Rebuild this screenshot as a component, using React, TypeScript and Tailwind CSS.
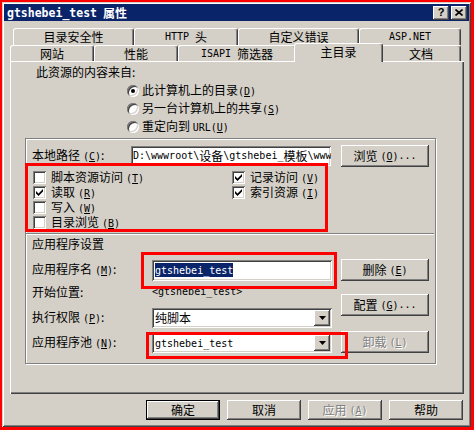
import React from "react";

const RAISED =
  "shadow-[inset_-1px_-1px_#404040,inset_1px_1px_#ffffff,inset_-2px_-2px_#808080]";
const DEFAULT_BTN =
  "shadow-[inset_0_0_0_1px_#000000,inset_-2px_-2px_#404040,inset_2px_2px_#ffffff,inset_-3px_-3px_#808080]";
const SUNKEN =
  "shadow-[inset_1px_1px_#808080,inset_-1px_-1px_#ffffff,inset_2px_2px_#404040,inset_-2px_-2px_#d4d0c8]";
const DISABLED_TEXT = "text-[#808080] [text-shadow:1px_1px_0_#ffffff]";

// 라틴 문자는 고정폭 (宋体 반각 폭 6px 맞춤)
function L({ children }: { children: React.ReactNode }) {
  return (
    <span className="font-['DejaVu_Sans_Mono',monospace] text-[10px] leading-[12px]">
      {children}
    </span>
  );
}

// 단축키 표시 (X)
function Mn({ k, gap = true }: { k: string; gap?: boolean }) {
  return (
    <span className={gap ? "ml-[3px]" : ""}>
      <L>
        (<u className="underline-offset-1">{k}</u>)
      </L>
    </span>
  );
}

function Btn({
  className,
  children,
  disabled,
  isDefault,
}: {
  className: string;
  children: React.ReactNode;
  disabled?: boolean;
  isDefault?: boolean;
}) {
  return (
    <div
      className={`flex shrink-0 items-center justify-center bg-[#d4d0c8] leading-[12px] ${
        isDefault ? DEFAULT_BTN : RAISED
      } ${disabled ? DISABLED_TEXT : ""} ${className}`}
    >
      {children}
    </div>
  );
}

function Check({ checked }: { checked?: boolean }) {
  return (
    <div
      className={`flex h-[13px] w-[13px] shrink-0 items-center justify-center bg-white ${SUNKEN}`}
    >
      {checked && (
        <svg width="7" height="7" viewBox="0 0 7 7">
          <polygon points="0,2 2.5,4.5 7,0 7,2.5 2.5,7 0,4.5" fill="#000" />
        </svg>
      )}
    </div>
  );
}

function CheckRow({
  checked,
  label,
  k,
}: {
  checked?: boolean;
  label: string;
  k: string;
}) {
  return (
    <div className="flex h-[15px] items-center gap-[5px]">
      <Check checked={checked} />
      <span className="leading-[12px] whitespace-nowrap">
        {label}
        <Mn k={k} />
      </span>
    </div>
  );
}

function Radio({ on }: { on?: boolean }) {
  return (
    <div
      className={`flex h-3 w-3 shrink-0 items-center justify-center rounded-full bg-white ${SUNKEN}`}
    >
      {on && <div className="h-1 w-1 rounded-full bg-black" />}
    </div>
  );
}

function Select({ children }: { children: React.ReactNode }) {
  return (
    <div
      className={`flex h-[20px] w-[180px] items-center bg-white pr-[2px] pl-[3px] ${SUNKEN}`}
    >
      <div className="flex-1 leading-[12px] whitespace-nowrap">{children}</div>
      <div
        className={`flex h-[16px] w-[16px] items-center justify-center bg-[#d4d0c8] ${RAISED}`}
      >
        <svg width="7" height="4" viewBox="0 0 7 4">
          <path d="M0 0h7L3.5 4z" fill="#000" />
        </svg>
      </div>
    </div>
  );
}

function Tab({
  className,
  children,
  active,
}: {
  className: string;
  children: React.ReactNode;
  active?: boolean;
}) {
  return (
    <div
      className={`flex shrink-0 items-center justify-center rounded-t-[3px] border-t border-r border-l border-t-white border-r-[#404040] border-l-white bg-[#d4d0c8] leading-[12px] shadow-[inset_-1px_0_#808080] ${
        active ? "relative z-10 -mx-[2px] -mt-[2px] -mb-[1px] pb-[2px]" : ""
      } ${className}`}
    >
      {children}
    </div>
  );
}

function Red({ className }: { className: string }) {
  return (
    <div
      className={`pointer-events-none absolute border-[3px] border-[#ff0000] ${className}`}
    />
  );
}

export default function App() {
  return (
    <div className="h-[430px] w-[474px] bg-[#ff0000] pt-[2px] pr-[3px] pb-[3px] pl-[2px] font-['Noto_Sans_CJK_SC',sans-serif] text-[12px] leading-[14px] text-black">
      <div className="flex h-full w-full flex-col bg-[#d4d0c8] p-[2px] shadow-[inset_1px_1px_#d4d0c8,inset_-1px_-1px_#404040,inset_2px_2px_#ffffff,inset_-2px_-2px_#808080]">
        {/* 제목 표시줄 */}
        <div className="flex h-[17px] items-center justify-between bg-[#0a246a] pr-[2px] pl-[3px]">
          <div className="flex items-center font-bold text-white">
            <span className="font-['DejaVu_Sans_Mono',monospace] text-[11.5px]">
              gtshebei_test
            </span>
            <span className="ml-[6px]">属性</span>
          </div>
          <div className="flex gap-[2px]">
            <Btn className="h-[14px] w-[16px] pb-[1px] text-[11px] font-bold">
              <span className="font-['Liberation_Sans',sans-serif]">?</span>
            </Btn>
            <Btn className="h-[14px] w-[16px] pb-[1px]">
              <svg width="8" height="7" viewBox="0 0 8 7">
                <path
                  d="M0.5 0.5L7.5 6.5M7.5 0.5L0.5 6.5"
                  stroke="#000"
                  strokeWidth="1.6"
                />
              </svg>
            </Btn>
          </div>
        </div>

        {/* 탭 */}
        <div className="mt-[7px] flex h-[17px] pl-[9px]">
          <Tab className="h-[17px] w-[121px]">目录安全性</Tab>
          <Tab className="h-[17px] w-[104px]">
            <L>HTTP</L>
            <span className="ml-[6px]">头</span>
          </Tab>
          <Tab className="h-[17px] w-[121px]">自定义错误</Tab>
          <Tab className="h-[17px] w-[102px]">
            <L>ASP.NET</L>
          </Tab>
        </div>
        <div className="flex h-[16px] items-start pl-[6px]">
          <Tab className="h-[16px] w-[84px]">网站</Tab>
          <Tab className="h-[16px] w-[84px]">性能</Tab>
          <Tab className="h-[16px] w-[118px]">
            <L>ISAPI</L>
            <span className="ml-[6px]">筛选器</span>
          </Tab>
          <Tab active className="h-[19px] w-[89px]">
            主目录
          </Tab>
          <Tab className="h-[16px] w-[80px]">文档</Tab>
        </div>

        {/* 탭 패널 */}
        <div className="ml-[6px] flex h-[333px] w-[454px] flex-col shadow-[inset_1px_1px_#ffffff,inset_-1px_-1px_#404040,inset_-2px_-2px_#808080]">
          <div className="mt-[1px] flex h-[20px] items-center pl-[26px]">
            此资源的内容来自:
          </div>
          <div className="flex flex-col pl-[117px]">
            <div className="flex h-[18px] items-center gap-[3px]">
              <Radio on />
              <span className="leading-[12px]">
                此计算机上的目录
                <Mn k="D" gap={false} />
              </span>
            </div>
            <div className="flex h-[18px] items-center gap-[3px]">
              <Radio />
              <span className="leading-[12px]">
                另一台计算机上的共享
                <Mn k="S" gap={false} />
              </span>
            </div>
            <div className="flex h-[18px] items-center gap-[3px]">
              <Radio />
              <span className="leading-[12px]">
                重定向到 <L>URL</L>
                <Mn k="U" gap={false} />
              </span>
            </div>
          </div>

          {/* 그룹 상자 */}
          <div className="relative mt-[2px] ml-[15px] flex h-[226px] w-[411px] flex-col border border-[#808080] shadow-[inset_1px_1px_#ffffff,1px_1px_#ffffff]">
            <div className="mt-[6px] flex h-[22px] items-center pl-[6px]">
              <div className="w-[99px] leading-[12px]">
                本地路径
                <Mn k="C" />:
              </div>
              <div
                className={`flex h-[20px] w-[200px] items-center overflow-hidden bg-white pl-[2px] leading-[12px] whitespace-nowrap ${SUNKEN}`}
              >
                <L>D:\wwwroot\</L>设备<L>\gtshebei_</L>模板<L>\www</L>
              </div>
              <Btn className="ml-[10px] h-[22px] w-[88px]">
                浏览
                <Mn k="O" />
                <L>...</L>
              </Btn>
            </div>

            <div className="mt-[3px] flex pl-[7px]">
              <div className="flex w-[199px] flex-col">
                <CheckRow label="脚本资源访问" k="T" />
                <CheckRow checked label="读取" k="R" />
                <CheckRow label="写入" k="W" />
                <CheckRow label="目录浏览" k="B" />
              </div>
              <div className="flex flex-col">
                <CheckRow checked label="记录访问" k="V" />
                <CheckRow checked label="索引资源" k="I" />
              </div>
            </div>

            <div className="mt-[3px] mr-[1px] h-[2px] border-t border-b border-t-[#808080] border-b-white" />

            <div className="flex h-[18px] items-center pl-[6px]">应用程序设置</div>

            <div className="flex">
              <div className="flex w-[306px] flex-col pl-[6px]">
                <div className="mt-[6px] flex h-[22px] items-center">
                  <div className="w-[120px] leading-[12px]">
                    应用程序名
                    <Mn k="M" />:
                  </div>
                  <div
                    className={`flex h-[21px] w-[180px] items-center bg-white pl-[3px] ${SUNKEN}`}
                  >
                    <span className="bg-[#0a246a] leading-[12px] text-white">
                      <L>gtshebei_test</L>
                    </span>
                  </div>
                </div>
                <div className="mt-[2px] flex h-[18px] items-center">
                  <div className="w-[120px] leading-[12px]">开始位置:</div>
                  <L>&lt;gtshebei_test&gt;</L>
                </div>
                <div className="mt-[6px] flex h-[21px] items-center">
                  <div className="w-[120px] leading-[12px]">
                    执行权限
                    <Mn k="P" />:
                  </div>
                  <Select>纯脚本</Select>
                </div>
                <div className="mt-[4px] flex h-[21px] items-center">
                  <div className="w-[120px] leading-[12px]">
                    应用程序池
                    <Mn k="N" />:
                  </div>
                  <Select>
                    <L>gtshebei_test</L>
                  </Select>
                </div>
              </div>
              <div className="ml-[9px] flex flex-col">
                <Btn className="mt-[6px] h-[22px] w-[88px]">
                  删除
                  <Mn k="E" />
                </Btn>
                <Btn className="mt-[13px] h-[22px] w-[88px]">
                  配置
                  <Mn k="G" />
                  <L>...</L>
                </Btn>
                <Btn disabled className="mt-[15px] h-[22px] w-[88px]">
                  卸载
                  <Mn k="L" />
                </Btn>
              </div>
            </div>

            {/* 빨간 표시 상자 */}
            <Red className="top-[24px] -left-[1px] h-[69px] w-[303px]" />
            <Red className="top-[113px] left-[115px] h-[37px] w-[196px]" />
            <Red className="top-[193px] left-[120px] h-[27px] w-[202px]" />
          </div>
        </div>

        {/* 하단 버튼 */}
        <div className="mt-[6px] flex justify-end gap-[7px] pr-[6px]">
          <Btn isDefault className="h-[20px] w-[74px]">
            确定
          </Btn>
          <Btn className="h-[20px] w-[74px]">取消</Btn>
          <Btn disabled className="h-[20px] w-[74px]">
            应用
            <Mn k="A" />
          </Btn>
          <Btn className="h-[20px] w-[74px]">帮助</Btn>
        </div>
      </div>
    </div>
  );
}
